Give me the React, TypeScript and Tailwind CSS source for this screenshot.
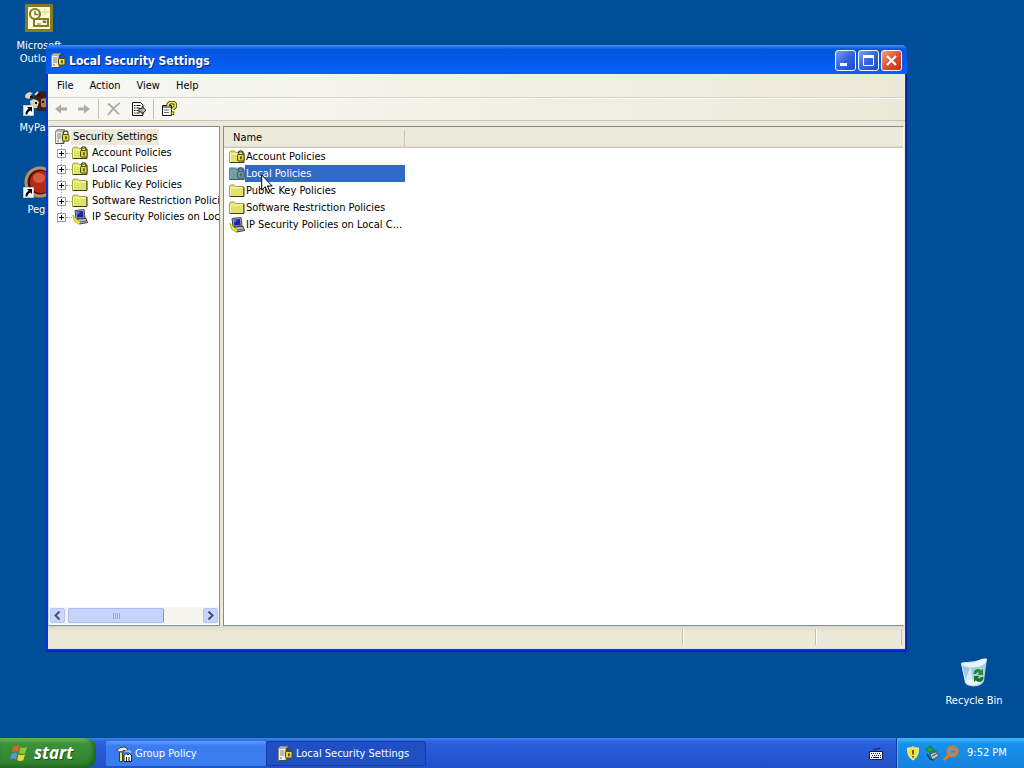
import type { ReactNode } from "react";

function LockMark() {
  return (
    <>
      <path d="M9.500 6V4a2.200 2.200 0 0 1 4.400 0V6" fill="none" stroke="#4a4a14" strokeWidth="1.300" />
      <rect x="8.500" y="5.500" width="6.500" height="6.500" rx="1" fill="#e3dc3c" stroke="#4a4a14" />
      <rect x="11.300" y="7.300" width="1.300" height="3" fill="#222208" />
    </>
  );
}

function ServerLockIcon() {
  return (
    <svg viewBox="0 0 16 16" className="size-4 shrink-0" aria-hidden="true">
      <path d="M1.500 2.500 3 .5h7.500l-1 2v12h-8z" fill="#b4b4ac" stroke="#8c8c84" />
      <path d="M2 3h6v11H2z" fill="#f0f0ea" />
      <path d="M3 5h4.500M3 7h4.500M3 9h4.500" stroke="#84847c" />
      <path d="M3 12h2" stroke="#d04028" />
      <path d="M10 12v2.500H2" fill="none" stroke="#4b4b45" />
      <LockMark />
    </svg>
  );
}

function FolderIcon({ lock = false, selected = false }: { lock?: boolean; selected?: boolean }) {
  return (
    <svg viewBox="0 0 16 16" className="size-4 shrink-0" aria-hidden="true">
      <path d="M.5 13.500v-10l1-1.500h4l1.500 1.500h7.500v10z" fill="#dfe36a" stroke="#a3a336" />
      <path d="M1.500 5h12" stroke="#fafac4" />
      <path d="M1.500 5v8" stroke="#fafac4" />
      <path d="M1 13.500h14V4" fill="none" stroke="#3d3d1c" />
      {lock && <LockMark />}
      {selected && <rect x="0" y="1.500" width="15.500" height="12.500" fill="#316ac5" fillOpacity=".6" />}
    </svg>
  );
}

function ComputerIcon() {
  return (
    <svg viewBox="0 0 16 16" className="size-4 shrink-0" aria-hidden="true">
      <path d="M3 1.500 12 .5l1 8.500-9 .5z" fill="#b8b8c0" stroke="#44444c" />
      <path d="m4.500 2.500 6.500-.5.700 6-6.700.5z" fill="#1626a8" />
      <path d="M5 3.200 8 3l-2.500 3z" fill="#6d86f4" />
      <path d="m5 10 9-.5 1.500 4-8 1.500z" fill="#c4c4cc" stroke="#33333a" />
      <path d="m8 13 6-1" stroke="#55555f" />
      <path d="M.8 6 3 8.500l5.500 5-1.500 1.700-4.500-3z" fill="#eeee30" stroke="#9a9a10" strokeWidth=".7" />
    </svg>
  );
}

function ToolsIcon() {
  return (
    <svg viewBox="0 0 16 16" className="size-4 shrink-0" aria-hidden="true">
      <path d="M1 4.500 4 1.500l5-.5 3 2.500-2 1H7L5.500 6H3L1.500 5z" fill="#e8e8e8" stroke="#222" strokeWidth=".8" />
      <path d="M3.500 6h3v9.500h-3z" fill="#f4e44a" stroke="#222" strokeWidth=".8" />
      <path d="M8 15.500V9l2-1.500L12 9l1.500-1.500 2 1.500v6.500z" fill="#fff" stroke="#222" />
      <path d="M10.500 11v4M13 11v4" stroke="#222" />
      <path d="M9 5h5v2" fill="none" stroke="#eee" />
    </svg>
  );
}

function ShortcutArrow() {
  return (
    <svg viewBox="0 0 11 11" className="absolute bottom-0 left-0 size-[11px]" aria-hidden="true">
      <path d="M.5.5h10v10H.5z" fill="#fff" stroke="#c8c8c8" />
      <path d="M4 2h5v5L7.400 5.400C5.500 6.500 4.500 7.500 4.500 9.500H2.500C2.300 7 3.500 5 5.700 3.700z" fill="#000" />
    </svg>
  );
}

function DesktopIcon({ label, place, children }: { label: string; place: string; children: ReactNode }) {
  return (
    <button type="button" className={`absolute flex w-[78px] flex-col items-center gap-[5px] text-center leading-[13px] text-white ${place}`}>
      <span className="relative block size-8">{children}</span>
      <span>{label}</span>
    </button>
  );
}

function ToolButton({ label, disabled, children }: { label: string; disabled?: boolean; children: ReactNode }) {
  return (
    <button type="button" aria-label={label} disabled={disabled} className="flex h-[22px] w-[23px] items-center justify-center">
      <svg viewBox="0 0 16 16" className="size-4" aria-hidden="true">{children}</svg>
    </button>
  );
}

function ToolSeparator() {
  return <span className="mx-[3px] h-5 w-px bg-[#c5c2b2]" />;
}

function CaptionButton({ label, tone, children }: { label: string; tone: string; children: ReactNode }) {
  return (
    <button type="button" aria-label={label} className={`flex size-[21px] items-center justify-center rounded-[3px] border border-white bg-linear-to-br ${tone}`}>
      <svg viewBox="0 0 19 19" className="size-[19px]" aria-hidden="true">{children}</svg>
    </button>
  );
}

function ScrollButton({ label, d }: { label: string; d: string }) {
  return (
    <button type="button" aria-label={label} className="flex h-[15px] w-[15px] items-center justify-center rounded-[2px] border border-[#b3c3f3] bg-[#c8d6fb]">
      <svg viewBox="0 0 9 9" className="size-[9px]" aria-hidden="true">
        <path d={d} fill="none" stroke="#414f7d" strokeWidth="2" />
      </svg>
    </button>
  );
}

const MENUS = ["File", "Action", "View", "Help"];

const POLICIES: { name: string; short: string; kind: "lock" | "folder" | "computer" }[] = [
  { name: "Account Policies", short: "Account Policies", kind: "lock" },
  { name: "Local Policies", short: "Local Policies", kind: "lock" },
  { name: "Public Key Policies", short: "Public Key Policies", kind: "folder" },
  { name: "Software Restriction Policies", short: "Software Restriction Policies", kind: "folder" },
  { name: "IP Security Policies on Local Computer", short: "IP Security Policies on Local C...", kind: "computer" },
];

function PolicyIcon({ kind, selected }: { kind: string; selected?: boolean }) {
  return kind === "computer" ? <ComputerIcon /> : <FolderIcon lock={kind === "lock"} selected={selected} />;
}

function TreePane() {
  return (
    <nav aria-label="Console tree" className="flex w-[172px] shrink-0 flex-col border border-[#7b8e99] border-l-[#c8d4e4] bg-white pb-px pl-px">
      <div className="flex-1 overflow-hidden pt-[2px] whitespace-nowrap">
        <button type="button" className="ml-1 flex h-4 items-center gap-px">
          <ServerLockIcon />
          <span className="bg-[#ece9d8] px-[2px] leading-4">Security Settings</span>
        </button>
        <ul className="ml-[11px] h-[74px] border-l border-dotted border-[#a0a0a0]">
          {POLICIES.map((p) => (
            <li key={p.name} className="-ml-[5px] flex h-4 items-center">
              <button type="button" aria-label={`Expand ${p.name}`} className="size-[9px] shrink-0">
                <svg viewBox="0 0 9 9" className="size-[9px]" aria-hidden="true">
                  <path d="M.5.5h8v8h-8z" fill="#fff" stroke="#8c9aa8" />
                  <path d="M2 4.500h5M4.500 2v5" stroke="#000" />
                </svg>
              </button>
              <span className="w-[6px] shrink-0 border-t border-dotted border-[#a0a0a0]" />
              <button type="button" className="flex items-center gap-1">
                <PolicyIcon kind={p.kind} />
                <span>{p.name}</span>
              </button>
            </li>
          ))}
        </ul>
      </div>
      <div className="flex h-[17px] items-center gap-[3px] bg-[#f6f5f0] pr-px">
        <ScrollButton label="Scroll left" d="M6.500 .5l-4 4 4 4" />
        <div className="flex flex-1">
          <div className="flex h-[15px] w-[73%] items-center justify-center gap-px rounded-[2px] border border-[#a9bbef] border-r-[#8496c8] bg-[#c8d5fb]">
            <i className="h-[6px] w-px bg-[#96aae6]" />
            <i className="h-[6px] w-px bg-[#96aae6]" />
            <i className="h-[6px] w-px bg-[#96aae6]" />
            <i className="h-[6px] w-px bg-[#96aae6]" />
          </div>
        </div>
        <ScrollButton label="Scroll right" d="M2.500 .5l4 4-4 4" />
      </div>
    </nav>
  );
}

function ListPane() {
  return (
    <section aria-label="Policies" className="min-w-0 flex-1 border border-[#7b8e99] border-r-white bg-white">
      <table className="w-full table-fixed border-collapse">
        <colgroup>
          <col className="w-[181px]" />
          <col />
        </colgroup>
        <thead>
          <tr className="h-[21px] bg-[#ebeadb] shadow-[inset_0_-1px_0_#cbc7b8,inset_0_-2px_0_#dfdccd]">
            <th scope="col" className="p-0 text-left font-normal">
              <span className="block border-r border-[#c7c5b2] pl-[9px] leading-4">Name</span>
            </th>
            <td className="p-0" />
          </tr>
        </thead>
        <tbody>
          {POLICIES.map((p, i) => (
            <tr key={p.name} className={i === 1 ? "h-[17px] text-white" : "h-[17px]"}>
              <td className="p-0 pl-[5px]">
                <span className="flex h-[17px] items-center">
                  <PolicyIcon kind={p.kind} selected={i === 1} />
                  <span className={i === 1 ? "flex-1 bg-[#316ac5] pl-px leading-[17px]" : "pl-px leading-[17px] whitespace-nowrap"}>
                    {p.short}
                  </span>
                </span>
              </td>
              <td className="p-0" />
            </tr>
          ))}
        </tbody>
      </table>
    </section>
  );
}

function SettingsWindow() {
  return (
    <main className="absolute top-[45px] right-[117px] bottom-[86px] left-[46px] flex flex-col overflow-hidden rounded-t-[5px] bg-[#0a35cf] px-[2px] pb-[3px] shadow-[inset_-1px_-1px_0_#001da0,inset_1px_0_0_#0831d9]">
      <header className="-mx-[2px] flex h-[29px] shrink-0 items-center gap-[3px] bg-linear-to-b from-[#3d8ff5] from-0% via-[#0453dd] via-15% to-[#0560f6] to-90% pt-[2px] pr-[5px] pl-1">
        <ServerLockIcon />
        <h1 className="flex-1 text-[12px] font-bold text-white [text-shadow:1px_1px_0_#0a1f80]">Local Security Settings</h1>
        <div className="flex gap-[2px]">
          <CaptionButton label="Minimize" tone="from-[#7c9cf0] via-[#3664de] to-[#2048c8]">
            <path d="M4 12h7v3H4z" fill="#fff" />
          </CaptionButton>
          <CaptionButton label="Maximize" tone="from-[#7c9cf0] via-[#3664de] to-[#2048c8]">
            <path d="M4.500 5.500h10v9h-10z" fill="none" stroke="#fff" />
            <path d="M4 5.500h11" stroke="#fff" strokeWidth="3" />
          </CaptionButton>
          <CaptionButton label="Close" tone="from-[#f0a088] via-[#dd5030] to-[#c03010]">
            <path d="m5 5 9 9M14 5l-9 9" stroke="#fff" strokeWidth="2.200" />
          </CaptionButton>
        </div>
      </header>
      <div className="flex min-h-0 flex-1 flex-col bg-[#ece9d8]">
        <div className="bg-linear-to-r from-[#f8f8f6] to-[#ece9d8]">
          <nav aria-label="Menu" className="flex h-6 items-center border-b border-[#d5d2c3] pl-px">
            {MENUS.map((m) => (
              <button key={m} type="button" className="px-2">{m}</button>
            ))}
          </nav>
          <div role="toolbar" aria-label="Standard" className="flex h-[23px] items-center border-t border-b border-t-white border-b-[#c9c6b5] pb-px pl-px">
            <ToolButton label="Back" disabled>
              <path d="M2 8l6-4.500v3h6v3H8v3z" fill="#adada8" />
            </ToolButton>
            <ToolButton label="Forward" disabled>
              <path d="M14 8 8 3.500v3H2v3h6v3z" fill="#adada8" />
            </ToolButton>
            <ToolSeparator />
            <ToolButton label="Delete" disabled>
              <path d="M2 2.500c4 3 7 6.500 11 11M14 2C9 5 6 9 2 14" fill="none" stroke="#aaa9a2" strokeWidth="1.700" />
            </ToolButton>
            <span className="w-[2px]" />
            <ToolButton label="Export List">
              <path d="M1.500 1.500h8l2.500 2.500v10.500H1.500z" fill="#fff" stroke="#111" />
              <path d="M3 4.500h1.500M3 7h1.500M3 9.500h1.500M3 12h1.500M5.500 4.500h4M5.500 7h3M5.500 9.500h2M5.500 12h3" stroke="#111" />
              <path d="M8 7.500h3v-2l4 3.800-4 3.700v-2H8z" fill="#b9b9b0" stroke="#222" />
            </ToolButton>
            <ToolSeparator />
            <ToolButton label="Help">
              <path d="M1.500 4.500h9v10h-9z" fill="#fff" stroke="#111" />
              <path d="M2 6h8" stroke="#111" />
              <path d="M3 9h5M3 11.500h5" stroke="#666" />
              <path d="M7 5c0-5 7.500-4.500 7.500-.5C14.500 7 11.500 7 11.500 9" fill="none" stroke="#333300" strokeWidth="3.600" />
              <path d="M9.800 10.500h3.500V14H9.800z" fill="#333300" />
              <path d="M7 5c0-5 7.500-4.500 7.500-.5C14.500 7 11.500 7 11.500 9" fill="none" stroke="#f5ee28" strokeWidth="1.900" />
              <path d="M10.600 11.300h1.900v1.900h-1.900z" fill="#f5ee28" />
            </ToolButton>
          </div>
        </div>
        <div className="flex min-h-0 flex-1 gap-[3px] pt-[5px] pr-px">
          <TreePane />
          <ListPane />
        </div>
        <footer className="flex h-[23px] shrink-0 items-center border-b border-[#d6e0f5] bg-linear-to-b from-[#dedbca] to-[#ece9d8] to-30% pr-[3px]">
          <span className="h-4 flex-1 border-r border-[#c1beac]" />
          <span className="h-4 w-[133px] border-r border-l border-r-[#c1beac] border-l-white" />
          <span className="h-4 w-[86px] border-r border-l border-r-[#c1beac] border-l-white" />
        </footer>
      </div>
    </main>
  );
}

function Desktop() {
  return (
    <div className="relative flex-1 overflow-hidden">
      <DesktopIcon label="Microsoft Outlook" place="top-[2px] left-0">
        <svg viewBox="0 0 32 32" className="size-8" aria-hidden="true">
          <path d="M3.500 3.500h25v25h-25z" fill="#fbf9dc" stroke="#827d1e" strokeWidth="3" />
          <path d="M22 7v6M26 10h-7" stroke="#e8e4a0" strokeWidth="2" />
          <circle cx="12" cy="12" r="5" fill="#fffef0" stroke="#827d1e" strokeWidth="2.200" />
          <path d="M12 9v3.500h3.500" fill="none" stroke="#827d1e" strokeWidth="1.600" />
          <path d="M11 17h14v7H11z" fill="#fffef0" stroke="#827d1e" strokeWidth="2" />
          <path d="M20 19h3v1.500h-3zM14 22h4" fill="#827d1e" stroke="#827d1e" />
        </svg>
      </DesktopIcon>
      <DesktopIcon label="MyPaint" place="top-[84px] left-0">
        <svg viewBox="0 0 32 32" className="size-8" aria-hidden="true">
          <path d="M11 14c0-9 18-10 20 4l-4 9H14z" fill="#3c2014" />
          <path d="M2 12c1-4 6-5 8-2-3 0-3 2-1 3-3 3-7 2-7-1z" fill="#e4d2b4" />
          <path d="M7 17c3-3 7-2 9 1l-2 6H8z" fill="#d8d3b6" />
          <path d="M18 15c4-2 9 0 8 4s-6 6-8 3z" fill="#b97946" />
          <path d="M7 13h3M13 12l4-2M12 19h2M19 18h2" stroke="#1f100c" strokeWidth="2" />
          <path d="M12 11l3-3" stroke="#e4d2b4" strokeWidth="2" />
        </svg>
        <ShortcutArrow />
      </DesktopIcon>
      <DesktopIcon label="Pegs" place="top-[166px] left-0">
        <svg viewBox="0 0 32 32" className="size-8" aria-hidden="true">
          <circle cx="17" cy="16" r="14" fill="#441510" stroke="#c0905c" strokeWidth="3" />
          <circle cx="18" cy="16" r="11" fill="#b42c18" />
          <ellipse cx="16" cy="12" rx="6" ry="5" fill="#d85a3c" />
        </svg>
        <ShortcutArrow />
      </DesktopIcon>
      <DesktopIcon label="Recycle Bin" place="right-[11px] bottom-[31px]">
        <svg viewBox="0 0 32 32" className="size-8" aria-hidden="true">
          <path d="M3 6 7 25c1 6 17 6 19-1l3-22z" fill="#a9cbee" />
          <path d="M3 6C8 4 13 7 18 4.500S26 1 29 2c-1 5-5 7-10 8-6 1-12 0-16-4z" fill="#e9f5fd" />
          <path d="m3 6 4 19c3 2 6 3 8 3L13 10.500C9 10 6 9 3 6z" fill="#d7eafa" />
          <path d="m4.500 9 3 13L12 11z" fill="#a3c5e8" />
          <ellipse cx="15" cy="25.500" rx="7.500" ry="3" fill="#edf7fd" />
          <path d="M15.500 17c0-5.500 5.500-6 7.800-3.500l1.700-1.500v6h-5.500l1.700-1.800c-1.500-1.200-2.800-.5-3 .8z" fill="#22902b" />
          <path d="M25.500 20c0 5.500-5.500 6-7.800 3.500L16 25v-6h5.500l-1.700 1.800c1.500 1.200 2.800.5 3-.8z" fill="#0d7d20" />
        </svg>
      </DesktopIcon>
      <SettingsWindow />
      <svg viewBox="0 0 12 20" className="absolute top-[174px] left-[261px] h-5 w-3" aria-hidden="true">
        <path d="M.7 1v15l3.500-3.300 2.600 6 2.200-1-2.600-5.700h4.800z" fill="#fff" stroke="#000" />
      </svg>
    </div>
  );
}

function TaskButton({ label, active, children }: { label: string; active?: boolean; children: ReactNode }) {
  return (
    <button
      type="button"
      className={
        active
          ? "flex h-[25px] w-40 items-center gap-[3px] rounded-[2px] border border-[#173a9c] bg-[#1e4fc4] pl-[10px] text-white"
          : "flex h-[25px] w-40 items-center gap-[3px] rounded-[2px] bg-linear-to-b from-[#5a9bfa] to-[#3a7df0] to-20% pl-[10px] text-white"
      }
    >
      {children}
      <span>{label}</span>
    </button>
  );
}

function Taskbar() {
  return (
    <footer className="flex h-[30px] shrink-0 items-stretch bg-linear-to-b from-[#3c80ee] from-0% via-[#2b5fdd] via-15% to-[#2250c8]">
      <button type="button" className="flex w-24 items-center gap-1 rounded-r-[10px] bg-linear-to-b from-[#6fb56b] from-0% via-[#3a9339] via-20% to-[#2f7f2e] pl-[10px] text-white shadow-[inset_-3px_-2px_4px_#1f6420]">
        <svg viewBox="0 0 20 18" className="h-[18px] w-5" aria-hidden="true">
          <path d="M3.500 2.500c2-1.500 4-1.300 5.700 0L7.700 8.300C6 7 4 7 2 8.300z" fill="#ea5a2a" />
          <path d="M10.500 3c2 1.300 4 1.200 6.500 0l-1.600 6c-2 1.200-4.500 1.200-6.400-.2z" fill="#84c93c" />
          <path d="M1.600 9.700c2-1.300 4-1.200 5.700 0L5.800 15.500C4 14.300 2 14.300 0 15.500z" fill="#5a91ee" />
          <path d="M8.600 10.200c2 1.300 4 1.300 6.400 0l-1.600 5.900c-2 1.300-4.500 1.200-6.300-.2z" fill="#f7d23a" />
        </svg>
        <span className="font-['Open_Sans','Liberation_Sans',sans-serif] text-[17px] font-bold italic [text-shadow:1px_1px_1px_#1c4f1c]">start</span>
      </button>
      <div className="flex flex-1 items-center pt-px pl-[10px]">
        <TaskButton label="Group Policy">
          <ToolsIcon />
        </TaskButton>
        <TaskButton label="Local Security Settings" active>
          <ServerLockIcon />
        </TaskButton>
      </div>
      <button type="button" aria-label="Language bar" className="flex w-10 items-center justify-center pt-px">
        <svg viewBox="0 0 14 13" className="h-[13px] w-[14px]" aria-hidden="true">
          <path d="M4 3c1.500-2.500 2.500.5 4-1 1-1 2 0 3.500-1" fill="none" stroke="#0c1440" />
          <path d="M.5 4.500h13v8H.5z" fill="#f4f4f4" stroke="#111a3c" />
          <path d="M2 6.500h10M3 8.500h9" stroke="#111a3c" strokeDasharray="1 1" />
          <path d="M2 10.500h1M4 10.500h6M11 10.500h1" stroke="#111a3c" />
        </svg>
      </button>
      <div className="flex w-32 items-center gap-[3px] border-l border-[#0f3c9e] bg-linear-to-b from-[#3fbaf8] from-0% via-[#1791ec] via-20% to-[#1583e0] pl-2 text-white shadow-[inset_1px_0_0_#48b8f4]">
        <svg viewBox="0 0 16 16" className="size-4" aria-hidden="true">
          <path d="M8 1.700C6.500 2.700 4.500 3 2.500 3c0 6.500 1.500 9.500 5.500 12 4-2.500 5.500-5.500 5.500-12-2 0-4-.3-5.500-1.300z" fill="#f6e43a" stroke="#e9ecd0" />
          <path d="M8 5v4.500M8 11v1.500" stroke="#3a3200" strokeWidth="1.500" />
        </svg>
        <svg viewBox="0 0 16 16" className="size-4" aria-hidden="true">
          <path d="m6 9 6-3 3 5-7 4z" fill="#b4c4c8" stroke="#40545f" />
          <path d="m8 11 5-2.500" stroke="#40545f" />
          <path d="M1.500 4 7 1v2c3 0 4 1.500 4 5C10 6.500 9 6 7 6v2.500z" fill="#1fa83c" stroke="#0c6a20" strokeWidth=".7" />
          <path d="m3 9 3 5 4 1" fill="none" stroke="#29484c" strokeWidth="1.500" />
        </svg>
        <svg viewBox="0 0 16 16" className="size-4" aria-hidden="true">
          <circle cx="9.500" cy="6.500" r="4.800" fill="#49a5e8" stroke="#e07a20" strokeWidth="2.600" />
          <path d="m6 10-5 5" stroke="#e07a20" strokeWidth="3" />
          <path d="m8 8 1.500-1.500h2.500" fill="none" stroke="#c0601a" strokeWidth="1.500" />
        </svg>
        <time className="pl-[5px]">9:52 PM</time>
      </div>
    </footer>
  );
}

export default function App() {
  return (
    <div className="flex min-h-screen flex-col bg-[#004e98] font-['DejaVu_Sans_Condensed','Liberation_Sans',sans-serif] text-[11px] leading-4 text-black">
      <Desktop />
      <Taskbar />
    </div>
  );
}
